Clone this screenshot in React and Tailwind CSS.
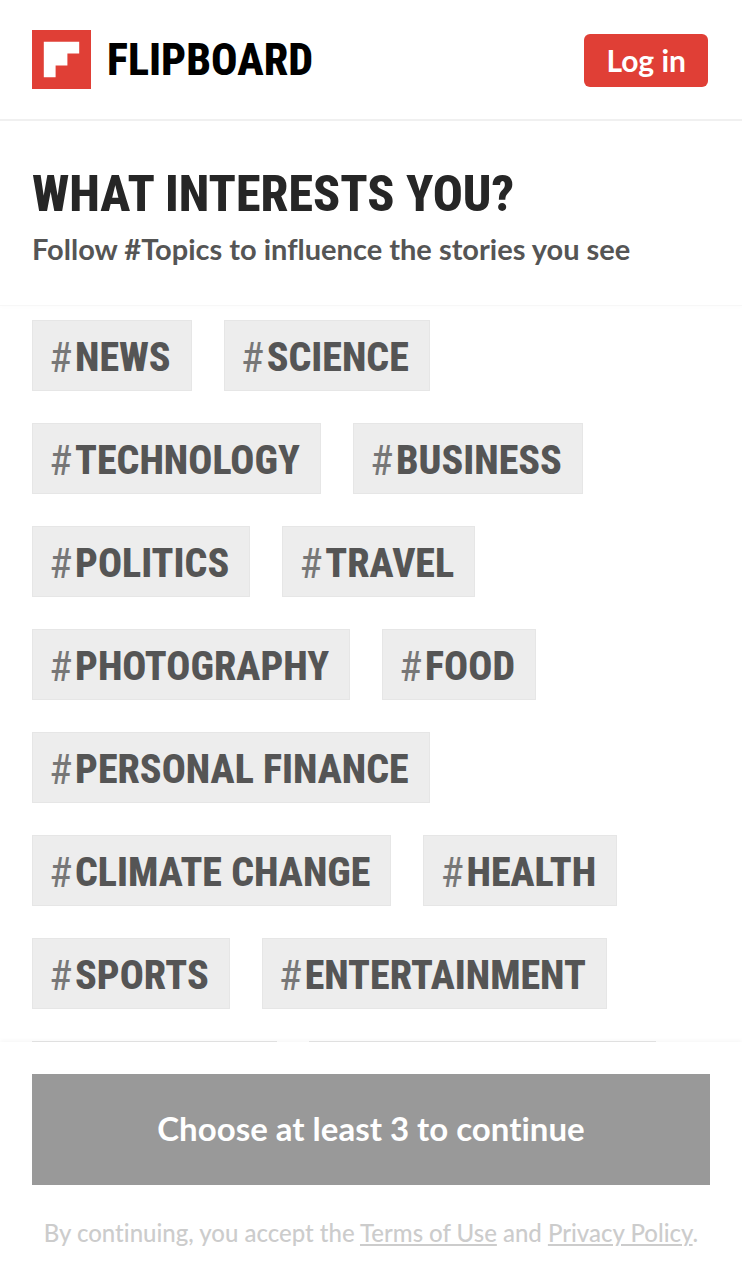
const topics = [
  "NEWS", "SCIENCE", "TECHNOLOGY", "BUSINESS", "POLITICS", "TRAVEL",
  "PHOTOGRAPHY", "FOOD", "PERSONAL FINANCE", "CLIMATE CHANGE", "HEALTH",
  "SPORTS", "ENTERTAINMENT", "CELEBRITY", "ENTREPRENEURS",
];

const condensed = "font-['Roboto_Condensed','Liberation_Sans_Narrow',sans-serif]";

function Logo() {
  return (
    <a href="#" className="flex items-center gap-4 text-black">
      <svg viewBox="0 0 60 60" className="size-[59px]" aria-hidden="true">
        <path fill="#e03f36" d="M0 0h60v60H0z" />
        <path fill="#fff" d="M12 12h36v12H36v12H24v12H12z" />
      </svg>
      <span className={`${condensed} text-[44px] leading-none font-extrabold`}>FLIPBOARD</span>
    </a>
  );
}

function Topic({ name }) {
  return (
    <button type="button" className={`${condensed} flex h-[71px] items-center gap-[3px] border border-[#e6e6e6] bg-[#ededed] pt-1 pr-5 pl-4 text-[40px] leading-none text-[#777]`}>
      <span className="text-[42px]">#</span>
      <span className="font-extrabold text-[#555]">{name}</span>
    </button>
  );
}

export default function App() {
  return (
    <div className="flex h-screen flex-col bg-white font-['Lato','Noto_Sans',sans-serif] [font-variant-ligatures:no-common-ligatures]">
      <header className="flex h-[121px] shrink-0 items-center justify-between border-b-2 border-[#f0f0f0] pr-[34px] pl-8">
        <Logo />
        <button type="button" className="mt-[2px] h-[53px] rounded-md bg-[#e03f36] px-[22px] pb-[2px] text-[30px] leading-none font-bold text-white">
          Log in
        </button>
      </header>
      <section className="shrink-0 border-b border-[#f7f7f7] px-8 pt-[47px] pb-9 shadow-[0_2px_4px_rgba(0,0,0,0.01)]">
        <h1 className={`${condensed} text-[50px] leading-[53px] font-extrabold text-[#262626]`}>WHAT INTERESTS YOU?</h1>
        <p className="mt-2 text-[29px] leading-10 font-bold text-[#555]">Follow #Topics to influence the stories you see</p>
      </section>
      <main className="min-h-0 flex-1 overflow-hidden px-8 pt-[14px]">
        <div className="flex flex-wrap gap-8">
          {topics.map((name) => <Topic key={name} name={name} />)}
        </div>
      </main>
      <footer className="shrink-0 px-8 pt-8 pb-[31px] shadow-[0_-2px_4px_rgba(0,0,0,0.03)]">
        <button type="button" className="h-[111px] w-full bg-[#999] pb-[2px] text-[33px] leading-none font-bold text-white">
          Choose at least 3 to continue
        </button>
        <p className="mt-8 text-center text-[24px] leading-8 font-medium whitespace-nowrap text-[#ccc]">
          By continuing, you accept the <a href="#" className="underline">Terms of Use</a> and <a href="#" className="underline">Privacy Policy</a>.
        </p>
      </footer>
    </div>
  );
}
